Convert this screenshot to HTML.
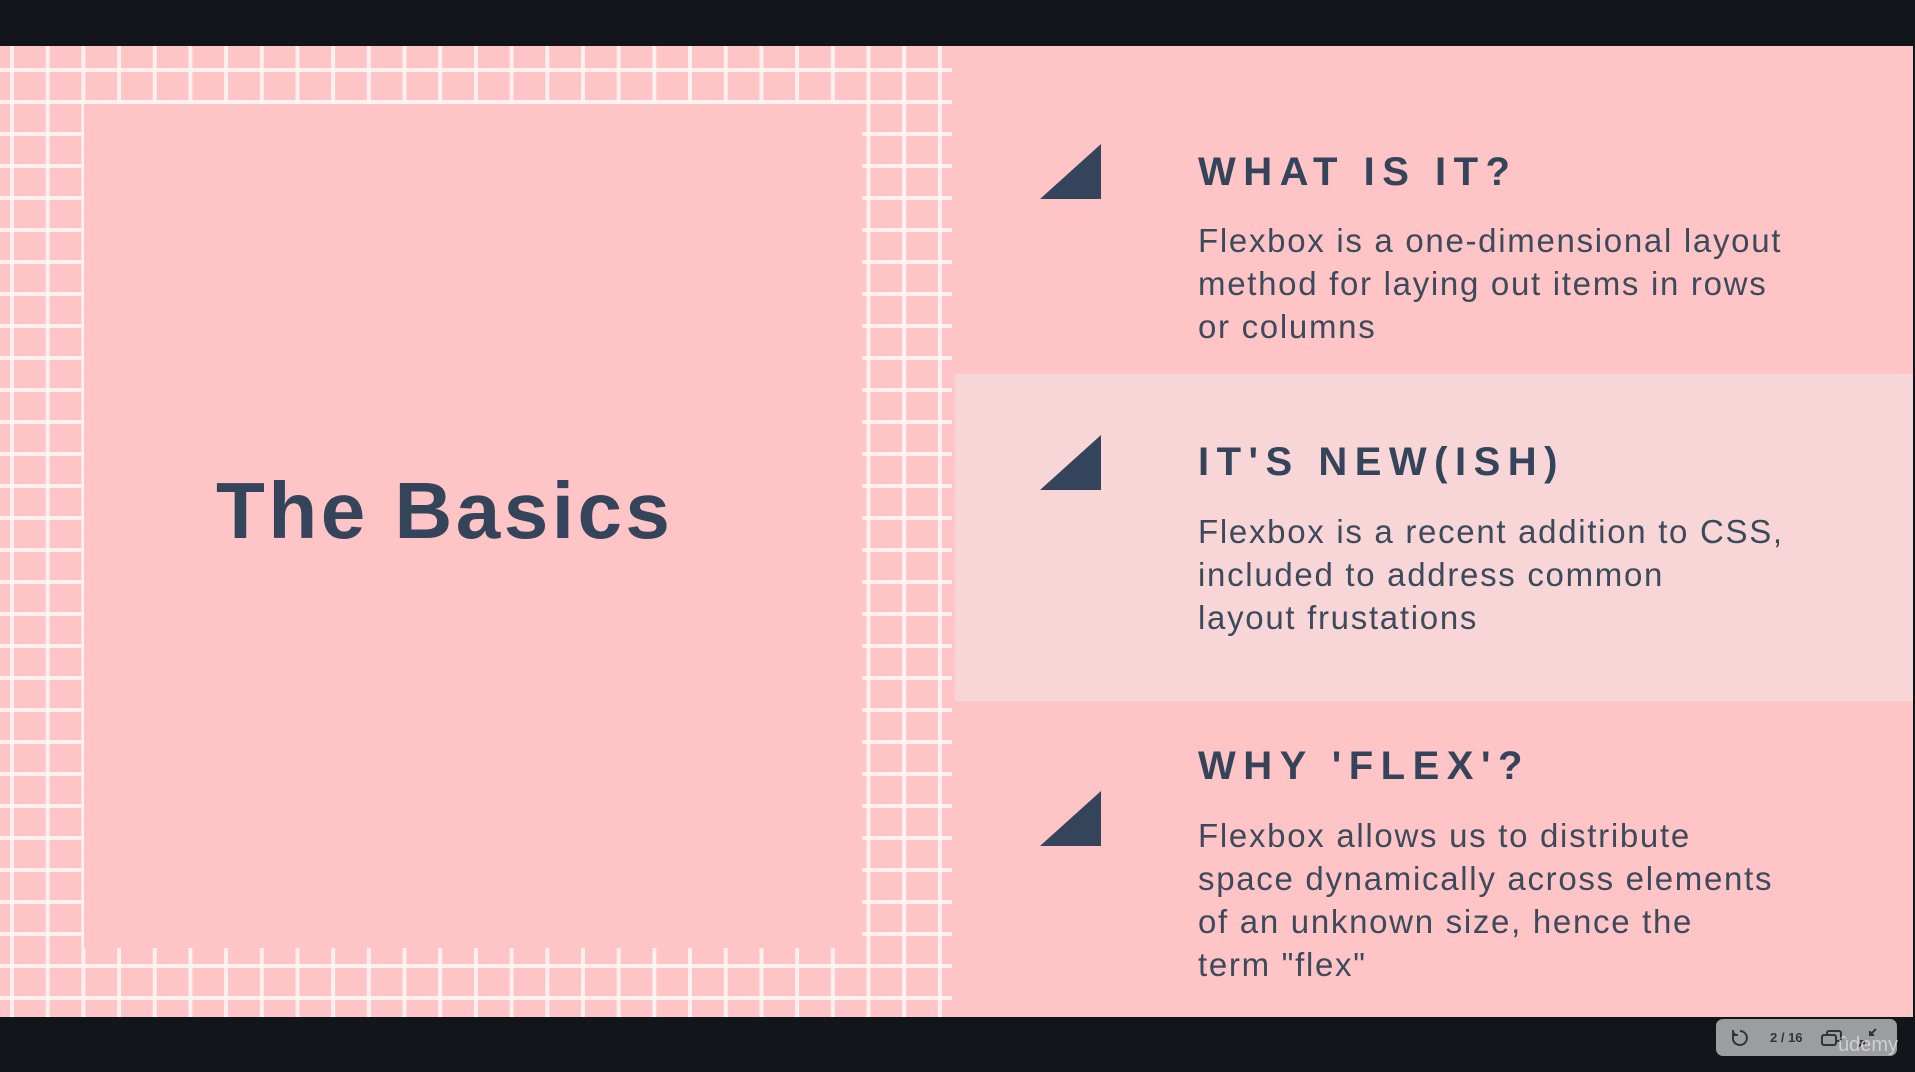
<!DOCTYPE html>
<html><head><meta charset="utf-8"><style>
*{margin:0;padding:0}
body{width:1915px;height:1072px;background:#121519;position:relative;overflow:hidden;font-family:"Liberation Sans",sans-serif}
.slide{position:absolute;left:0;top:46px;width:1913px;height:971px;background:#fec4c6}
.grid{position:absolute;left:0;top:0;width:952px;height:971px;
background-image:linear-gradient(to right,rgba(255,243,243,.95) 4px,transparent 4px),linear-gradient(to bottom,rgba(255,243,243,.95) 4px,transparent 4px);
background-size:35.7px 32px;background-position:10px 22px}
.inner{position:absolute;left:84px;top:58px;width:778px;height:844px;background:#fec4c6}
.mid{position:absolute;left:955px;top:328px;width:958px;height:327px;background:#f8d6d8}
.tri{position:absolute;width:0;height:0;border-left:61px solid transparent;border-bottom:55px solid #34445a}
h2{position:absolute;left:1198px;font-size:40px;font-weight:bold;letter-spacing:7.5px;color:#34445a;line-height:46px;white-space:nowrap}
p{position:absolute;left:1198px;font-size:33px;line-height:43px;color:#3d4a5c;letter-spacing:1.7px;white-space:nowrap}
.title{position:absolute;left:216px;top:415px;font-size:80px;font-weight:bold;color:#34445a;letter-spacing:3.5px;line-height:100px}
.ctrl{position:absolute;left:1716px;top:1019px;width:181px;height:37px;background:#9c9d9f;border-radius:7px;color:#333;font-size:13px}
</style></head><body>
<div class="slide">
<div class="grid"></div>
<div class="inner"></div>
<div class="title">The Basics</div>
<div class="mid"></div>
<div class="tri" style="left:1040px;top:98px"></div>
<div class="tri" style="left:1040px;top:389px"></div>
<div class="tri" style="left:1040px;top:745px"></div>
<h2 style="top:103px">WHAT IS IT?</h2>
<p style="top:173px">Flexbox is a one-dimensional layout<br>method for laying out items in rows<br>or columns</p>
<h2 style="top:393px">IT'S NEW(ISH)</h2>
<p style="top:464px">Flexbox is a recent addition to CSS,<br>included to address common<br>layout frustations</p>
<h2 style="top:697px">WHY 'FLEX'?</h2>
<p style="top:768px">Flexbox allows us to distribute<br>space dynamically across elements<br>of an unknown size, hence the<br>term "flex"</p>
</div>
<div class="ctrl">
<svg style="position:absolute;left:14px;top:9px" width="20" height="20" viewBox="0 0 20 20"><path d="M5 5A7 7 0 1 0 10 3" fill="none" stroke="#333" stroke-width="2"/><path d="M3 2v5h5" fill="none" stroke="#333" stroke-width="2"/></svg>
<span style="position:absolute;left:54px;top:11px;font-weight:bold">2 / 16</span>
<svg style="position:absolute;left:105px;top:10px" width="22" height="18" viewBox="0 0 22 18"><rect x="6" y="2" width="14" height="10" rx="2" fill="none" stroke="#333" stroke-width="2"/><rect x="1" y="6" width="14" height="10" rx="2" fill="#9c9d9f" stroke="#333" stroke-width="2"/></svg>
<svg style="position:absolute;left:140px;top:8px" width="22" height="22" viewBox="0 0 22 22"><path d="M20 2l-6 6M14 4v4h4M2 20l6-6M4 14h4v4" fill="none" stroke="#333" stroke-width="2"/></svg>
<span style="position:absolute;left:122px;top:15px;font-size:20px;color:#ddd;opacity:.8">ûdemy</span>
</div>
</body></html>
